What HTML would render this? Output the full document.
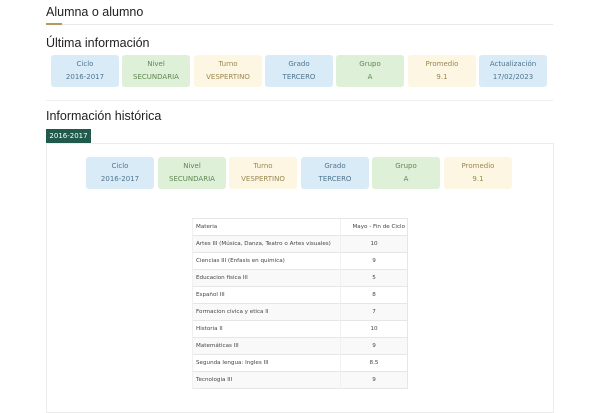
<!DOCTYPE html>
<html><head><meta charset="utf-8"><style>
*{margin:0;padding:0;box-sizing:border-box}
body{width:600px;height:400px;background:#fff;font-family:"DejaVu Sans","Liberation Sans",sans-serif;position:relative;overflow:hidden;color:#333}
.a{position:absolute}
h1,h2{position:absolute;font-weight:normal;color:#222;font-family:"Liberation Sans",sans-serif}
.card{position:absolute;width:68px;height:32px;border-radius:3px;text-align:center;font-size:7px;line-height:13px;padding-top:3px}
.b{background:#d9ebf7;color:#4f7590}
.g{background:#dff0d8;color:#5e8752}
.y{background:#fcf6e2;color:#9c8752}
table{position:absolute;left:192px;top:218px;width:215px;table-layout:fixed;border-collapse:collapse;font-size:5.6px;color:#444;border:1px solid #e6e6e6}
td{border-top:1px solid #e6e6e6;border-left:1px solid #f0f0f0;height:17px;padding:0 3px;white-space:nowrap;overflow:hidden}
td:first-child{width:148px}
td:last-child{text-align:center;width:67px}
tr:nth-child(even) td{background:#f9f9f9}
</style></head><body>
<h1 style="left:46px;top:5px;font-size:12.5px">Alumna o alumno</h1>
<div class="a" style="left:46px;top:24px;width:507px;height:1px;background:#e8e8e8"></div>
<div class="a" style="left:46px;top:23px;width:16px;height:2px;background:#b9995a"></div>
<h2 style="left:46px;top:36px;font-size:12.5px">Última información</h2>
<div class="card b" style="left:51px;top:55px">Ciclo<br>2016-2017</div>
<div class="card g" style="left:122px;top:55px">Nivel<br>SECUNDARIA</div>
<div class="card y" style="left:194px;top:55px">Turno<br>VESPERTINO</div>
<div class="card b" style="left:265px;top:55px">Grado<br>TERCERO</div>
<div class="card g" style="left:336px;top:55px">Grupo<br>A</div>
<div class="card y" style="left:408px;top:55px">Promedio<br>9.1</div>
<div class="card b" style="left:479px;top:55px">Actualización<br>17/02/2023</div>
<div class="a" style="left:46px;top:100px;width:507px;height:1px;background:#efefef"></div>
<h2 style="left:46px;top:109px;font-size:12.5px">Información histórica</h2>
<div class="a" style="left:46px;top:129px;width:45px;height:14px;background:#215a4c;color:#fff;font-size:7px;line-height:14px;text-align:center">2016-2017</div>
<div class="a" style="left:46px;top:143px;width:508px;height:270px;border:1px solid #ececec"></div>
<div class="card b" style="left:86px;top:157px">Ciclo<br>2016-2017</div>
<div class="card g" style="left:158px;top:157px">Nivel<br>SECUNDARIA</div>
<div class="card y" style="left:229px;top:157px">Turno<br>VESPERTINO</div>
<div class="card b" style="left:301px;top:157px">Grado<br>TERCERO</div>
<div class="card g" style="left:372px;top:157px">Grupo<br>A</div>
<div class="card y" style="left:444px;top:157px">Promedio<br>9.1</div>
<table>
<tr><td>Materia</td><td style="text-align:right;padding:0 2px">Mayo - Fin de Ciclo</td></tr>
<tr><td>Artes III (Música, Danza, Teatro o Artes visuales)</td><td>10</td></tr>
<tr><td>Ciencias III (Enfasis en quimica)</td><td>9</td></tr>
<tr><td>Educacion fisica III</td><td>5</td></tr>
<tr><td>Español III</td><td>8</td></tr>
<tr><td>Formacion civica y etica II</td><td>7</td></tr>
<tr><td>Historia II</td><td>10</td></tr>
<tr><td>Matemáticas III</td><td>9</td></tr>
<tr><td>Segunda lengua: Ingles III</td><td>8.5</td></tr>
<tr><td>Tecnologia III</td><td>9</td></tr>
</table>
</body></html>
